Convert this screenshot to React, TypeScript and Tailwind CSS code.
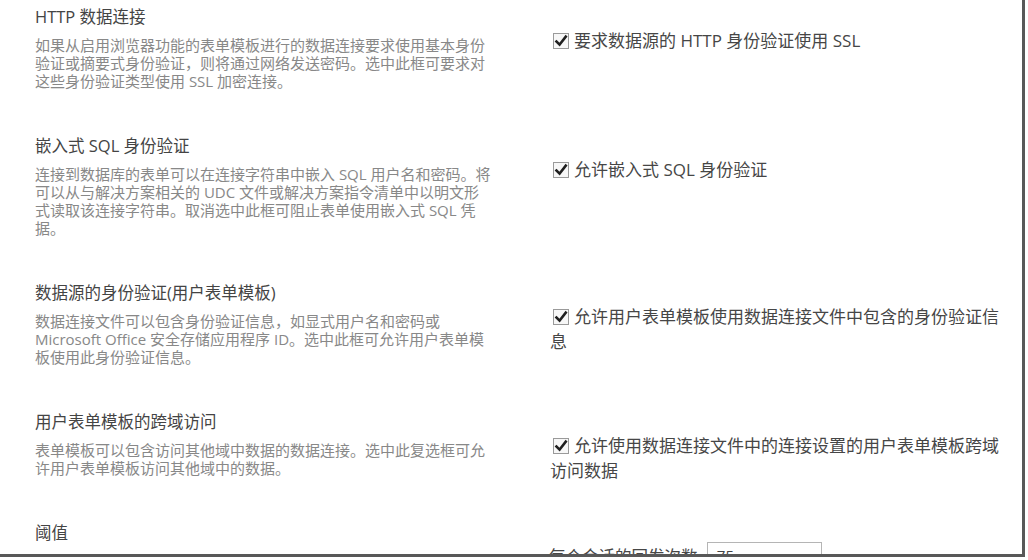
import React from 'react';

type Setting = {
  title: string;
  desc: string[];
  label: string[];
};

// lines are kept as they break in the page
const settings: Setting[] = [
  {
    title: 'HTTP 数据连接',
    desc: [
      '如果从启用浏览器功能的表单模板进行的数据连接要求使用基本身份',
      '验证或摘要式身份验证，则将通过网络发送密码。选中此框可要求对',
      '这些身份验证类型使用 SSL 加密连接。',
    ],
    label: ['要求数据源的 HTTP 身份验证使用 SSL'],
  },
  {
    title: '嵌入式 SQL 身份验证',
    desc: [
      '连接到数据库的表单可以在连接字符串中嵌入 SQL 用户名和密码。将',
      '可以从与解决方案相关的 UDC 文件或解决方案指令清单中以明文形',
      '式读取该连接字符串。取消选中此框可阻止表单使用嵌入式 SQL 凭',
      '据。',
    ],
    label: ['允许嵌入式 SQL 身份验证'],
  },
  {
    title: '数据源的身份验证(用户表单模板)',
    desc: [
      '数据连接文件可以包含身份验证信息，如显式用户名和密码或',
      'Microsoft Office 安全存储应用程序 ID。选中此框可允许用户表单模',
      '板使用此身份验证信息。',
    ],
    label: ['允许用户表单模板使用数据连接文件中包含的身份验证信', '息'],
  },
  {
    title: '用户表单模板的跨域访问',
    desc: [
      '表单模板可以包含访问其他域中数据的数据连接。选中此复选框可允',
      '许用户表单模板访问其他域中的数据。',
    ],
    label: ['允许使用数据连接文件中的连接设置的用户表单模板跨域', '访问数据'],
  },
];

function CheckBox() {
  return (
    <span className="inline-block w-[16px] h-[16px] ml-[3px] mr-[5px] align-[-2px] border border-[#9a9a9a] bg-[#f7f7f7] relative">
      <svg viewBox="0 0 16 16" className="absolute -left-px -top-px w-[16px] h-[16px]">
        <path d="M3.4 8.4 L6.6 11.6 L12.8 3.6" fill="none" stroke="#1f1f1f" strokeWidth="2.5" strokeLinecap="square" />
      </svg>
    </span>
  );
}

function Section({ title, desc, children }: { title: string; desc?: string[]; children: React.ReactNode }) {
  return (
    <div className="flex">
      <div className="w-[515px] pb-[45.5px]">
        <h3 className="text-[16.5px] leading-[22px] text-[#444]">{title}</h3>
        {desc && (
          <p className="mt-[7.5px] text-[15px] leading-[18px] text-[#888] whitespace-nowrap">
            {desc.map((line) => (
              <span key={line} className="block">
                {line}
              </span>
            ))}
          </p>
        )}
      </div>
      <div className="w-[460px] pt-[22px] text-[17px] leading-[25px] text-[#464646] whitespace-nowrap">
        {children}
      </div>
    </div>
  );
}

export default function App() {
  return (
    <div className="w-[1028px] h-[560px] bg-white font-[family-name:'Open_Sans','Noto_Sans_CJK_SC',sans-serif]">
      <div className="w-[1025px] h-[557px] border-r-[3px] border-b-[3px] border-[#585858] overflow-hidden">
        <div className="pt-[6px] pl-[35px]">
          {settings.map((s) => (
            <Section key={s.title} title={s.title} desc={s.desc}>
              <label>
                <CheckBox />
                {s.label.map((line, i) => (
                  <React.Fragment key={line}>
                    {i > 0 && <br />}
                    {line}
                  </React.Fragment>
                ))}
              </label>
            </Section>
          ))}
          <Section title="阈值">
            <div className="flex items-start gap-[5px] -ml-px">
              <span className="text-[16.5px]">每个会话的回发次数:</span>
              <span className="w-[115px] h-[26px] -mt-[2px] border border-[#b5b5b5] px-[9px] text-[15px] leading-[24px] text-[#444]">
                75
              </span>
            </div>
          </Section>
        </div>
      </div>
    </div>
  );
}
